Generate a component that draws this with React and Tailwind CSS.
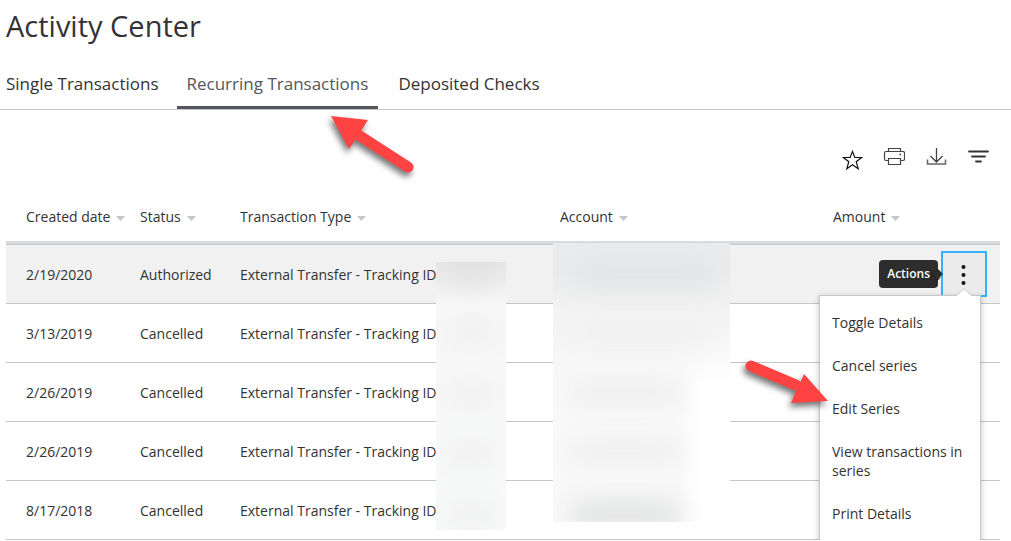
import { useState } from 'react';
import clsx from 'clsx';

const TABS = ['Single Transactions', 'Recurring Transactions', 'Deposited Checks'];

const COLUMNS = ['Created date', 'Status', 'Transaction Type', 'Account', 'Amount'];

const TRANSACTIONS = [
    { id: 1, date: '2/19/2020', status: 'Authorized', amount: '$1.00' },
    { id: 2, date: '3/13/2019', status: 'Cancelled' },
    { id: 3, date: '2/26/2019', status: 'Cancelled' },
    { id: 4, date: '2/26/2019', status: 'Cancelled' },
    { id: 5, date: '8/17/2018', status: 'Cancelled' }
];

const MENU_ITEMS = [
    'Toggle Details',
    'Cancel series',
    'Edit Series',
    'View transactions in series',
    'Print Details'
];

const StarIcon = () => (
    <svg width="22" height="22" viewBox="0 0 22 22" fill="none" stroke="#111" strokeWidth="1.2">
        <path d="M11.5 2.4 13.8 8.5H20.6L15.2 12.7 17.2 19.7 11.5 15.8 5.8 19.7 7.8 12.7 2.4 8.5H9.2Z" />
    </svg>
);

const PrintIcon = () => (
    <svg width="22" height="22" viewBox="0 0 22 22" fill="none" stroke="#444" strokeWidth="1.2">
        <path d="M5.5 4.5V1.5H17.5V4.5M5 13.5H3Q1.5 13.5 1.5 12V6Q1.5 4.5 3 4.5H20Q21.5 4.5 21.5 6V12Q21.5 13.5 20 13.5H18" />
        <path d="M5.5 11.5H17.5V17.5H5.5Z" />
        <path d="M16.5 7.5H18" stroke="#223a6b" strokeWidth="1.6" />
    </svg>
);

const DownloadIcon = () => (
    <svg width="22" height="22" viewBox="0 0 22 22" fill="none" stroke="#444" strokeWidth="1.3">
        <path d="M11.5 1V14.5M5.5 9 11.5 15 17.5 9" />
        <path d="M2.5 12.5V17H20.5V12.5" stroke="#666" strokeWidth="1.5" />
    </svg>
);

const FilterIcon = () => (
    <svg width="22" height="22" viewBox="0 0 22 22" fill="none" stroke="#333" strokeWidth="1.8" strokeLinecap="round">
        <path d="M2 4.5H21M5 9.5H18M9 14.5H14" />
    </svg>
);

const TOOLS = [
    { label: 'Favorite', icon: StarIcon, className: 'pt-1' },
    { label: 'Print', icon: PrintIcon },
    { label: 'Download', icon: DownloadIcon },
    { label: 'Filter', icon: FilterIcon }
];

const SortCaret = () => (
    <svg width="9" height="5" viewBox="0 0 9 5" className="mt-1" fill="#c4c8cc">
        <path d="M0 0H9L4.5 5Z" />
    </svg>
);

// Red pointer, drawn as a round-capped shaft and a head
const Pointer = ({ className, points, line }) => (
    <svg
        width="90"
        height="70"
        viewBox="0 0 90 70"
        aria-hidden="true"
        className={clsx('pointer-events-none absolute z-30 overflow-visible drop-shadow-[-2px_4px_3px_rgba(0,0,0,0.55)]', className)}
    >
        <path d={line} stroke="#ff4343" strokeWidth="11" strokeLinecap="round" />
        <polygon points={points} fill="#ff4343" />
    </svg>
);

// Hidden values: tracking IDs and account numbers
const Redactions = () => (
    <div aria-hidden="true">
        <div className="absolute top-[70px] left-[430px] h-[268px] w-[70px] overflow-hidden bg-linear-to-b from-[#e6e6e6] via-[#f7f7f7] via-15% to-[#f8f9f9]">
            <div className="mx-auto h-6 w-14 rounded-full bg-[#d8d8d8] opacity-50 blur-md" />
            {[1, 2, 3, 4].map((n) => (
                <div key={n} className="mx-auto mt-9 h-6 w-12 rounded-full bg-[#efefef] blur-md" />
            ))}
        </div>
        <div className="absolute top-[51px] left-[547px] h-[279px] w-[177px] overflow-hidden bg-linear-to-r from-[#f9f9f9] from-70% to-white to-85%">
            <div className="absolute inset-x-0 top-0 h-36 bg-linear-to-b from-[#eaebec] from-20% via-[#f4f4f4] via-50% to-transparent" />
            <div className="absolute top-5 left-5 h-6 w-36 rounded-full bg-[#e3e4e5] blur-md" />
            <div className="absolute top-20 left-5 h-5 w-36 rounded-full bg-[#efefef] blur-md" />
            <div className="absolute top-[138px] left-4 h-6 w-28 rounded-full bg-[#eeeeee] blur-md" />
            <div className="absolute top-[196px] left-4 h-6 w-28 rounded-full bg-[#eeeeee] blur-md" />
            <div className="absolute top-64 left-4 h-8 w-28 rounded-full bg-[#e3e4e4] blur-md" />
        </div>
    </div>
);

const ActionsMenu = () => (
    <div className="absolute top-[44px] right-1.5 z-20 w-[162px] border border-[#c4c6c8] bg-white shadow-[0_2px_6px_rgba(0,0,0,0.25)]">
        <svg width="16" height="8" viewBox="0 0 16 8" className="absolute right-2 bottom-full">
            <path d="M0 8 8 0.5 16 8Z" fill="#fff" />
            <path d="M0 8 8 0.5 16 8" fill="none" stroke="#c4c6c8" />
        </svg>
        <ul className="py-[5px]">
            {MENU_ITEMS.map((item) => (
                <li key={item}>
                    <button type="button" className="block w-full px-3 py-3 text-left leading-[19px]">
                        {item}
                    </button>
                </li>
            ))}
        </ul>
    </div>
);

const RowActions = () => (
    <div className="relative mr-[13px] ml-auto w-[46px]">
        <button
            type="button"
            aria-label="Actions"
            className="flex h-[46px] w-[46px] items-center justify-center border-2 border-[#36b2fb] bg-[#ebebeb]"
        >
            <svg width="6" height="22" viewBox="0 0 6 22" fill="#111">
                <circle cx="2.5" cy="4" r="2" />
                <circle cx="2.5" cy="12" r="2" />
                <circle cx="2.5" cy="20" r="2" />
            </svg>
        </button>
        <div role="tooltip" className="absolute top-[9px] right-full mr-[3px] rounded bg-[#222]/95 px-2 py-1 text-xs leading-5 font-semibold text-white">
            Actions
            <svg width="5" height="10" viewBox="0 0 5 10" className="absolute top-[9px] left-full" fill="#2e2e2e">
                <path d="M0 0 5 5 0 10Z" />
            </svg>
        </div>
        <ActionsMenu />
    </div>
);

const ColumnWidths = () => (
    <colgroup>
        <col className="w-[134px]" />
        <col className="w-[100px]" />
        <col className="w-[320px]" />
        <col />
        <col className="w-[108px]" />
        <col className="w-[59px]" />
    </colgroup>
);

const App = () => {
    const [activeTab, setActiveTab] = useState('Recurring Transactions');

    return (
        <div className="bg-white font-['Open_Sans',sans-serif] text-sm text-[#333]">
            <h1 className="px-1.5 pt-1.5 text-[29px] leading-10">Activity Center</h1>

            {/* Tabs */}
            <div className="relative mt-4 border-b border-[#c4c6c8]">
                <nav className="flex gap-2.5">
                    {TABS.map((tab) => (
                        <button
                            key={tab}
                            type="button"
                            onClick={() => setActiveTab(tab)}
                            className={clsx(
                                'h-[47px] border-b-[3px] px-2.5 text-[17px] leading-6 first:pr-2 first:pl-1.5',
                                tab === activeTab ? 'border-[#54565b] text-[#54565b]' : 'border-transparent'
                            )}
                        >
                            {tab}
                        </button>
                    ))}
                </nav>
                <Pointer className="top-[53px] left-[330px]" line="M78 52 30 21" points="1,1 38,5 19,34" />
            </div>

            {/* Toolbar */}
            <div className="flex items-start justify-end gap-5 pt-[35px] pr-[22px]">
                {TOOLS.map(({ label, icon: Icon, className }) => (
                    <button key={label} type="button" aria-label={label} className={clsx('h-[26px]', className)}>
                        <Icon />
                    </button>
                ))}
            </div>

            {/* Transactions */}
            <div className="relative mt-[21px] mr-[11px] ml-1.5">
                <table className="w-full table-fixed border-collapse text-left">
                    <ColumnWidths />
                    <thead>
                        <tr className="h-[49px]">
                            {COLUMNS.map((column) => (
                                <th key={column} scope="col" className="p-0 font-normal first:pl-5">
                                    <button type="button" className="flex items-center gap-1.5">
                                        {column}
                                        <SortCaret />
                                    </button>
                                </th>
                            ))}
                            <td />
                        </tr>
                    </thead>
                </table>
                <div className="relative border-t-[3px] border-[#d9dadb]">
                    <table className="w-full table-fixed border-separate border-spacing-0 border-t border-[#c4c6c8] text-left">
                        <ColumnWidths />
                        <tbody>
                            {TRANSACTIONS.map((row) => (
                                <tr key={row.id} className="h-[59px] first:bg-[#f1f1f1] *:border-b *:border-[#c4c6c8] *:px-0 *:pt-0.5 *:pb-0 *:last:pt-0">
                                    <td><span className="pl-5">{row.date}</span></td>
                                    <td>{row.status}</td>
                                    <td>External Transfer - Tracking ID</td>
                                    <td />
                                    <td className="text-right">{row.amount}</td>
                                    <td>{row.id === 1 && <RowActions />}</td>
                                </tr>
                            ))}
                        </tbody>
                    </table>
                </div>
                <Redactions />
                <Pointer className="right-[174px] bottom-[107px]" line="M15 3 60 22" points="92,38 68,11 55,40" />
            </div>
        </div>
    );
};

export default App;
